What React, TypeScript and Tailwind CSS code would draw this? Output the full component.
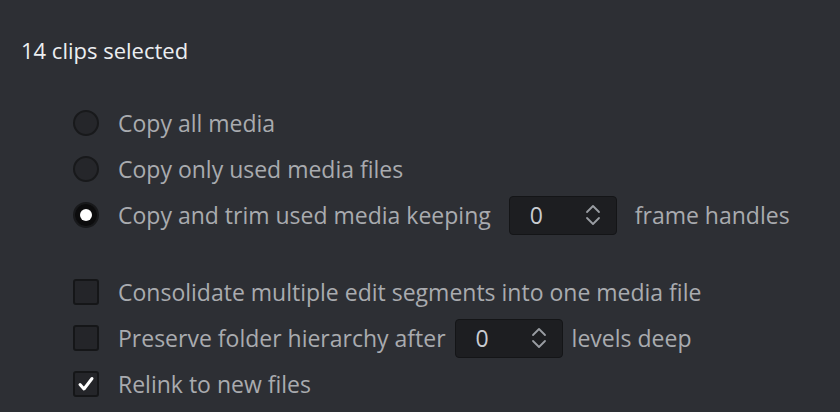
import React from 'react';

const Radio: React.FC<{ checked?: boolean }> = ({ checked }) => (
  <span className="flex h-[26px] w-[26px] shrink-0 items-center justify-center rounded-full border-2 border-[#18191b] bg-[#25262a]">
    {checked && (
      <span className="flex h-full w-full items-center justify-center rounded-full bg-[#0c0c0d]">
        <span className="h-[12px] w-[12px] rounded-full bg-white" />
      </span>
    )}
  </span>
);

const Checkbox: React.FC<{ checked?: boolean }> = ({ checked }) => (
  <span className="flex h-[26px] w-[26px] shrink-0 items-center justify-center rounded-[3px] border-2 border-[#151618] bg-[#242529]">
    {checked && (
      <svg width="18" height="18" viewBox="0 0 18 18" fill="none">
        <path d="M3 9.5L7 14L15 3.5" stroke="white" strokeWidth="3" strokeLinecap="round" strokeLinejoin="round" />
      </svg>
    )}
  </span>
);

const Spinner: React.FC<{ value: number }> = ({ value }) => (
  <div className="flex h-[39px] w-[108px] items-center justify-between rounded-[4px] border border-[#141517] bg-[#1d1e21] pl-[20px] pr-[15px]">
    <span className="text-[#c9ccd2]">{value}</span>
    <svg width="16" height="24" viewBox="0 0 16 24" fill="none">
      <path d="M2 9L8 3L14 9" stroke="#9a9da3" strokeWidth="1.8" strokeLinecap="round" strokeLinejoin="round" />
      <path d="M2 15L8 21L14 15" stroke="#9a9da3" strokeWidth="1.8" strokeLinecap="round" strokeLinejoin="round" />
    </svg>
  </div>
);

const Row: React.FC<{ control: React.ReactNode; children: React.ReactNode; tight?: boolean }> = ({
  control,
  children,
  tight,
}) => (
  <div className="flex h-[46px] items-center gap-[19px]">
    {control}
    <div className={tight ? 'flex items-center gap-[9px]' : 'flex items-center gap-[18px]'}>{children}</div>
  </div>
);

export default function App() {
  return (
    <div
      className="h-[412px] w-[840px] overflow-hidden bg-[#2d2f34] text-[23px] text-[#a9abaf]"
      style={{ fontFamily: '"Open Sans", sans-serif' }}
    >
      <div className="pl-[21px] pt-[33px] text-[22px] leading-[34px] text-[#eceef1]">14 clips selected</div>

      <div className="mt-[33px] pl-[73px]">
        <Row control={<Radio />}>Copy all media</Row>
        <Row control={<Radio />}>Copy only used media files</Row>
        <Row control={<Radio checked />}>
          <span>Copy and trim used media keeping</span>
          <Spinner value={0} />
          <span>frame handles</span>
        </Row>
      </div>

      <div className="mt-[31px] pl-[73px]">
        <Row control={<Checkbox />}>Consolidate multiple edit segments into one media file</Row>
        <Row control={<Checkbox />} tight>
          <span>Preserve folder hierarchy after</span>
          <Spinner value={0} />
          <span>levels deep</span>
        </Row>
        <Row control={<Checkbox checked />}>Relink to new files</Row>
      </div>
    </div>
  );
}
